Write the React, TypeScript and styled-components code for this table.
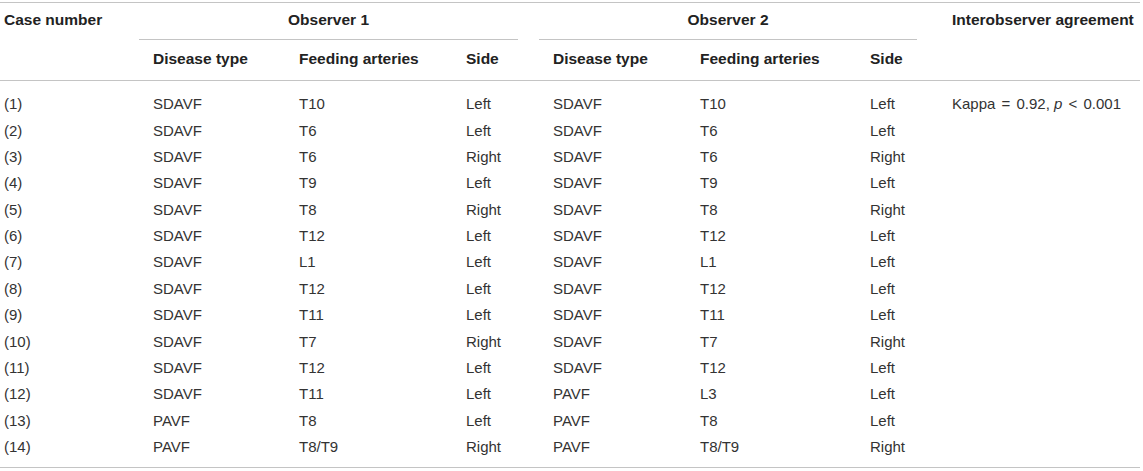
import React from 'react';
import styled, { createGlobalStyle } from 'styled-components';

const GlobalStyle = createGlobalStyle`
  body {
    margin: 0;
    background: #ffffff;
    font-family: "Liberation Sans", Arial, sans-serif;
  }
`;

const COLUMNS = '149px 146px 167px 87px 147px 170px 82px 188px';

const Table = styled.div`
  width: 1140px;
  margin-top: 2px;
  border-top: 1px solid #c4c4c4;
  border-bottom: 1px solid #c4c4c4;
  color: #333333;
`;

const HeadBlock = styled.div`
  border-bottom: 1px solid #c4c4c4;
`;

const Row = styled.div<{ pad?: string }>`
  display: grid;
  grid-template-columns: ${COLUMNS};
  padding: ${props => props.pad || '0'};
  padding-left: 4px;
`;

const HeadCell = styled.div<{ span?: number; center?: boolean }>`
  grid-column: span ${props => props.span || 1};
  font-size: 15.5px;
  font-weight: 700;
  line-height: 18px;
  color: #222222;
  text-align: ${props => (props.center ? 'center' : 'left')};
  white-space: nowrap;
`;

const GroupHead = styled(HeadCell)`
  margin: 0 35px 0 -14px;
  padding-bottom: 10px;
  border-bottom: 1px solid #c4c4c4;
`;

const Body = styled.div`
  padding: 10px 0 7px;
`;

const Cell = styled.div`
  font-size: 15px;
  line-height: 18px;
  padding: 4.2px 0;
  white-space: nowrap;
`;

const Em = styled.span`
  font-style: italic;
`;

// math operators get a little more room, like in the typeset table
const Op = styled.span`
  margin: 0 2px;
`;

type Entry = [string, string, string, string, string, string, string];

const rows: Entry[] = [
  ['(1)', 'SDAVF', 'T10', 'Left', 'SDAVF', 'T10', 'Left'],
  ['(2)', 'SDAVF', 'T6', 'Left', 'SDAVF', 'T6', 'Left'],
  ['(3)', 'SDAVF', 'T6', 'Right', 'SDAVF', 'T6', 'Right'],
  ['(4)', 'SDAVF', 'T9', 'Left', 'SDAVF', 'T9', 'Left'],
  ['(5)', 'SDAVF', 'T8', 'Right', 'SDAVF', 'T8', 'Right'],
  ['(6)', 'SDAVF', 'T12', 'Left', 'SDAVF', 'T12', 'Left'],
  ['(7)', 'SDAVF', 'L1', 'Left', 'SDAVF', 'L1', 'Left'],
  ['(8)', 'SDAVF', 'T12', 'Left', 'SDAVF', 'T12', 'Left'],
  ['(9)', 'SDAVF', 'T11', 'Left', 'SDAVF', 'T11', 'Left'],
  ['(10)', 'SDAVF', 'T7', 'Right', 'SDAVF', 'T7', 'Right'],
  ['(11)', 'SDAVF', 'T12', 'Left', 'SDAVF', 'T12', 'Left'],
  ['(12)', 'SDAVF', 'T11', 'Left', 'PAVF', 'L3', 'Left'],
  ['(13)', 'PAVF', 'T8', 'Left', 'PAVF', 'T8', 'Left'],
  ['(14)', 'PAVF', 'T8/T9', 'Right', 'PAVF', 'T8/T9', 'Right'],
];

const App: React.FC = () => {
  return (
    <>
      <GlobalStyle />
      <Table>
        <HeadBlock>
          <Row pad="8px 0 0">
            <HeadCell>Case number</HeadCell>
            <GroupHead span={3} center>Observer 1</GroupHead>
            <GroupHead span={3} center>Observer 2</GroupHead>
            <HeadCell>Interobserver agreement</HeadCell>
          </Row>
          <Row pad="10px 0 12px">
            <HeadCell />
            <HeadCell>Disease type</HeadCell>
            <HeadCell>Feeding arteries</HeadCell>
            <HeadCell>Side</HeadCell>
            <HeadCell>Disease type</HeadCell>
            <HeadCell>Feeding arteries</HeadCell>
            <HeadCell>Side</HeadCell>
            <HeadCell />
          </Row>
        </HeadBlock>
        <Body>
          {rows.map((r, i) => (
            <Row key={i}>
              {r.map((v, j) => (
                <Cell key={j}>{v}</Cell>
              ))}
              <Cell>
                {i === 0 && (
                  <>
                    Kappa <Op>=</Op> 0.92, <Em>p</Em> <Op>&lt;</Op> 0.001
                  </>
                )}
              </Cell>
            </Row>
          ))}
        </Body>
      </Table>
    </>
  );
};

export default App;
